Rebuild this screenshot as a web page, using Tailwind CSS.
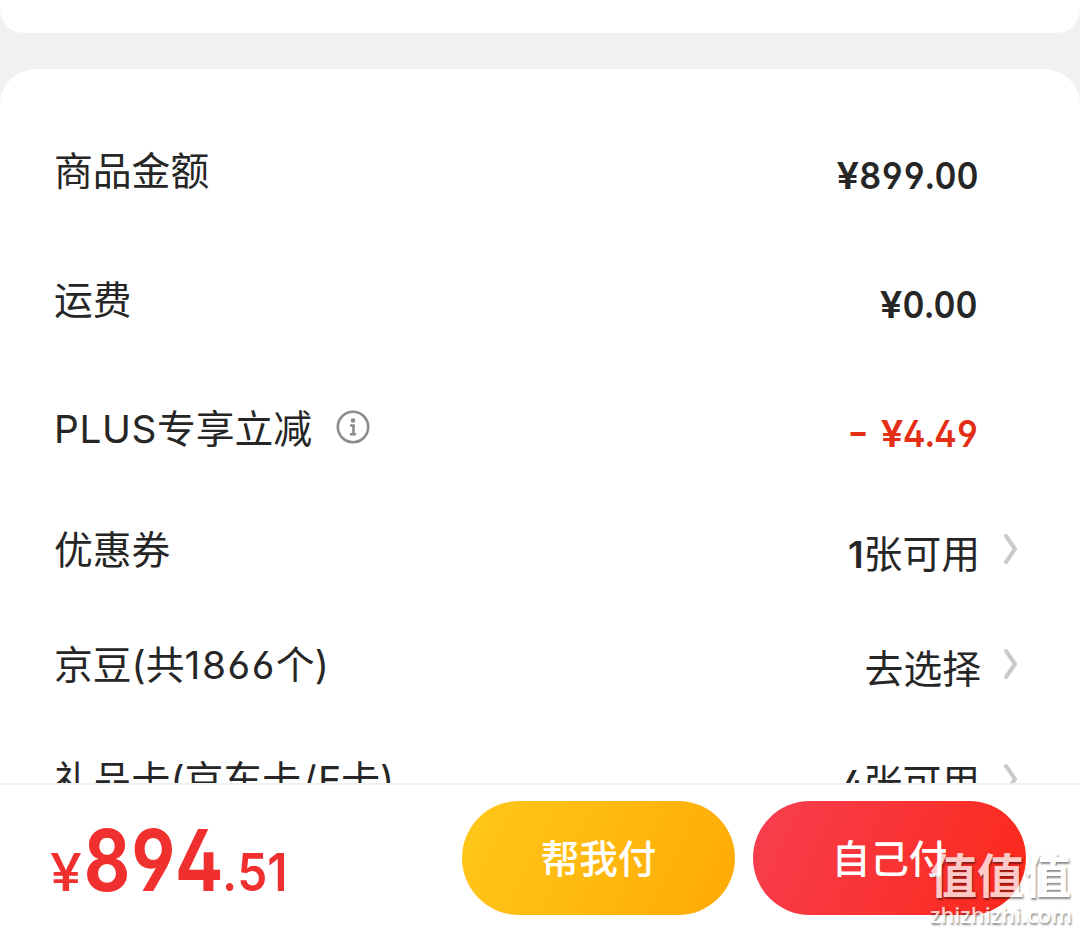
<!DOCTYPE html>
<html lang="zh-CN">
  <head>
    <meta charset="UTF-8" />
    <meta name="viewport" content="width=device-width, initial-scale=1.0" />
    <title>确认订单</title>
    <script src="https://cdn.jsdelivr.net/npm/@tailwindcss/browser@4"></script>
    <style>
      body {
        font-family: Inter, "Noto Sans CJK SC", sans-serif;
        font-feature-settings: "cv02", "cv03", "cv04";
        font-kerning: none;
      }
      .price {
        font-feature-settings: "cv02", "cv03", "cv04", "tnum";
      }
    </style>
  </head>
  <body class="relative flex h-[933px] w-[1080px] flex-col overflow-hidden bg-[#f1f1f1] text-[#262626]">
    <div class="h-[33px] shrink-0 rounded-b-[24px] bg-white"></div>

    <!-- Price details -->
    <main class="mt-9 min-h-0 flex-1 overflow-hidden rounded-t-[36px] bg-white pt-[37px] pr-[102px] pl-[54px] text-[38.8px]/[56px]">
      <div class="flex h-[129px] items-center justify-between">
        <span>商品金额</span>
        <span class="price origin-right scale-x-[.92] pt-2.5 text-[37px] font-semibold"><span class="inline-block origin-right scale-x-[1.18]">¥</span>899.00</span>
      </div>
      <div class="flex h-[129px] items-center justify-between">
        <span>运费</span>
        <span class="price origin-right scale-x-[.92] pt-2.5 text-[37px] font-semibold"><span class="inline-block origin-right scale-x-[1.18]">¥</span>0.00</span>
      </div>
      <div class="flex h-[129px] items-center justify-between">
        <div class="flex items-center">
          <span><span class="tracking-[0.6px]">PLUS</span>专享立减</span>
          <svg class="mb-1 ml-6 size-[34px]" viewBox="0 0 34 34" fill="none" stroke="#8c8c8c" stroke-width="2.6">
            <circle cx="17" cy="17" r="15.2" />
            <circle cx="17" cy="10.5" r="2.3" fill="#8c8c8c" stroke="none" />
            <path d="M14 15.5h3.5v8.5M14 24.2h6" />
          </svg>
        </div>
        <span class="price -mr-px origin-right scale-x-[.92] pt-2.5 text-[37px] font-semibold text-[#e42f16]"><span class="mr-0.5 inline-block origin-right -translate-y-0.5 scale-x-[1.35]">-</span> <span class="inline-block origin-right scale-x-[1.18]">¥</span>4.49</span>
      </div>
      <div class="flex h-[114px] items-center">
        <span>优惠券</span>
        <span class="ml-auto pt-2"><span class="text-[37px] font-semibold">1</span>张可用</span>
        <svg class="-mr-10 mb-0.5 ml-[23px] h-8 w-[15px] shrink-0" viewBox="0 0 15 32" fill="none" stroke="#cacaca" stroke-width="4" stroke-linecap="round" stroke-linejoin="round">
          <path d="M3 3l9 13-9 13" />
        </svg>
      </div>
      <div class="flex h-[115px] items-center">
        <span>京豆(共<span class="tracking-[1.6px]">1866</span>个)</span>
        <span class="ml-auto pt-2">去选择</span>
        <svg class="-mr-10 mb-0.5 ml-[22px] h-8 w-[15px] shrink-0" viewBox="0 0 15 32" fill="none" stroke="#cacaca" stroke-width="4" stroke-linecap="round" stroke-linejoin="round">
          <path d="M3 3l9 13-9 13" />
        </svg>
      </div>
      <div class="flex h-[115px] items-center">
        <span>礼品卡(京东卡<span class="mx-[1.5px]">/</span>E卡)</span>
        <span class="ml-auto pt-2"><span class="inline-block origin-right scale-x-90 text-[37px] font-semibold">4</span>张可用</span>
        <svg class="-mr-10 mb-0.5 ml-[23px] h-8 w-[15px] shrink-0" viewBox="0 0 15 32" fill="none" stroke="#cacaca" stroke-width="4" stroke-linecap="round" stroke-linejoin="round">
          <path d="M3 3l9 13-9 13" />
        </svg>
      </div>
    </main>

    <!-- Payment bar -->
    <footer class="flex h-[150px] shrink-0 items-start border-t-2 border-[#f0f0f0] bg-white pt-4 pl-[50px]">
      <div class="flex w-[412px] items-baseline text-[#f0302f]">
        <span class="w-[34px] origin-left scale-x-[1.1] text-[52px] font-medium">¥</span>
        <span class="price w-[138px] origin-left scale-x-[.84] text-[85px]/[119px] font-bold">894</span>
        <span class="origin-left scale-x-[.92] text-[52px] font-semibold">.51</span>
      </div>
      <button class="h-[114px] w-[273px] rounded-full bg-linear-[115deg] from-[#ffc81a] to-[#ffa905] pt-1 text-[38.6px] font-medium text-white">帮我付</button>
      <button class="ml-[18px] h-[114px] w-[273px] rounded-full bg-linear-[115deg] from-[#f73f50] to-[#fc2819] pt-1 text-[38.6px] font-medium text-white">自己付</button>
    </footer>

    <!-- Watermark -->
    <div class="absolute top-[850px] left-[930px] w-[150px] text-white opacity-75 [text-shadow:1px_2px_2px_rgb(0_0_0/0.6)]">
      <div class="text-[47px]/[52px] font-bold">值值值</div>
      <div class="font-['Open_Sans'] text-[21.8px]/[26px] font-semibold">zhizhizhi.com</div>
    </div>
  </body>
</html>
